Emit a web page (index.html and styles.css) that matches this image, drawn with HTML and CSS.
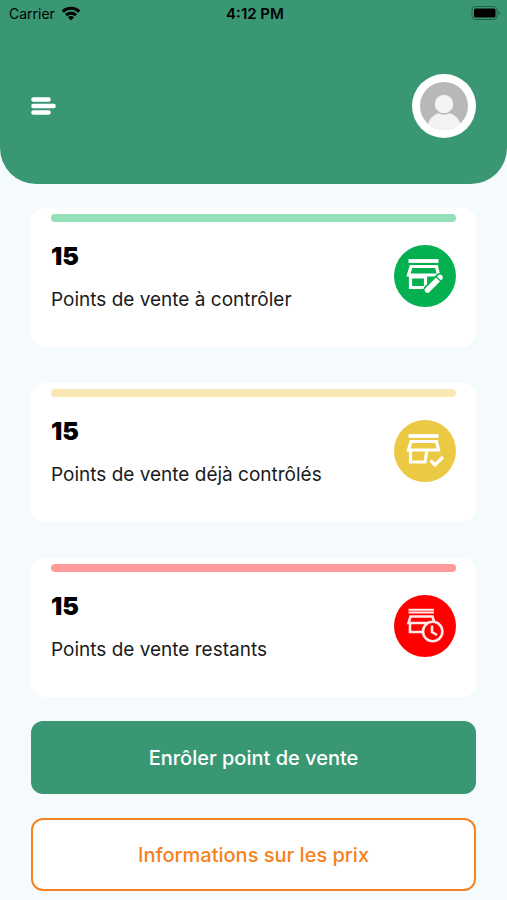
FILE: index.html
```html
<!DOCTYPE html>
<html lang="fr">
<head>
    <meta charset="UTF-8">
    <meta name="viewport" content="width=device-width, initial-scale=1.0">
    <title>Points de vente</title>
    <link rel="stylesheet" href="styles.css">
</head>
<body>
    <header class="header">
        <div class="status-bar">
            <div class="carrier">
                <span>Carrier</span>
                <svg width="20" height="15" viewBox="0 0 20 15" fill="none" stroke="#000" stroke-width="3">
                    <path d="M1.7 5.7a12 12 0 0 1 16.6 0"/>
                    <path d="M5 9.2a7.200 7.200 0 0 1 10 0"/>
                    <path d="M10 14.500 7 11.300a4.200 4.200 0 0 1 6 0z" fill="#000" stroke="none"/>
                </svg>
            </div>
            <span class="time">4:12 PM</span>
            <div class="battery">
                <svg width="30" height="14" viewBox="0 0 30 14">
                    <rect x="1" y="0.500" width="25" height="13" rx="3.500" fill="none" stroke="#226048"/>
                    <rect x="3" y="2.500" width="21.500" height="9" rx="1.500"/>
                    <path d="M27.500 5v4c2-.8 2-3.200 0-4z" fill="#226048"/>
                </svg>
            </div>
        </div>
        <div class="toolbar">
            <button type="button" class="menu-btn" aria-label="Menu">
                <svg width="25" height="20" viewBox="0 0 25 20" fill="none" stroke="#fff" stroke-width="4.600" stroke-linecap="round">
                    <path d="M2.500 3.500h15M2.500 10h20M2.500 16.500h15"/>
                </svg>
            </button>
            <button type="button" class="avatar" aria-label="Profil">
                <svg width="48" height="48" viewBox="0 0 48 48">
                    <circle cx="24" cy="24" r="24" fill="#b8b8b8"/>
                    <path d="M8 42c2-7 8-11.500 16-11.500S38.500 35 40.500 42A24 24 0 0 1 8 42z" fill="#f3f3f3"/>
                    <circle cx="24" cy="22" r="10" fill="#f3f3f3" stroke="#b8b8b8" stroke-width="1.500"/>
                </svg>
            </button>
        </div>
    </header>

    <main class="content">
        <section class="card green">
            <div class="card-bar"></div>
            <div class="card-body">
                <div>
                    <h2>15</h2>
                    <p>Points de vente à contrôler</p>
                </div>
                <svg class="card-icon" viewBox="0 0 62 62" fill="none" stroke="#fff" stroke-width="3.200">
                    <circle cx="31" cy="31" r="31" fill="#04b050" stroke="none"/>
                    <path d="M14.500 16h30" stroke-width="3.800"/>
                    <path d="M17 21.500h25.500l2 8.500h-30zM16.500 30v12.500h15V30M16.500 32h15"/>
                    <path d="M34 44.500l12-12" stroke="#04b050" stroke-width="9" stroke-linecap="round"/>
                    <path d="M33.500 45l12.500-12.500" stroke-width="5.500" stroke-linecap="round"/>
                    <path d="M42 31.500l5 5" stroke="#04b050" stroke-width="1.200"/>
                </svg>
            </div>
        </section>

        <section class="card yellow">
            <div class="card-bar"></div>
            <div class="card-body">
                <div>
                    <h2>15</h2>
                    <p>Points de vente déjà contrôlés</p>
                </div>
                <svg class="card-icon" viewBox="0 0 62 62" fill="none" stroke="#fff" stroke-width="3.200">
                    <circle cx="31" cy="31" r="31" fill="#ecc943" stroke="none"/>
                    <path d="M14.500 16h30" stroke-width="3.800"/>
                    <path d="M17 21.500h25.500l2 8.500h-30zM16.500 30v12h14.500l2-12"/>
                    <path d="M36.500 40.500l4.500 4.500 8-8"/>
                </svg>
            </div>
        </section>

        <section class="card red">
            <div class="card-bar"></div>
            <div class="card-body">
                <div>
                    <h2>15</h2>
                    <p>Points de vente restants</p>
                </div>
                <svg class="card-icon" viewBox="0 0 62 62" fill="none" stroke="#ffe9e9" stroke-width="2.600">
                    <circle cx="31" cy="31" r="31" fill="#fe0000" stroke="none"/>
                    <path d="M14.500 14.700h25.500M14.500 17.600h25.500" stroke-width="2"/>
                    <path d="M16.500 21.500h22l2 6.500h-26zM16 28v9h14"/>
                    <circle cx="38.700" cy="36.500" r="9.700" fill="#fe0000"/>
                    <path d="M38 30.500v6.500l5 3"/>
                </svg>
            </div>
        </section>

        <div class="actions">
            <button type="button" class="btn btn-primary">Enrôler point de vente</button>
            <button type="button" class="btn btn-outline">Informations sur les prix</button>
        </div>
    </main>
</body>
</html>
```
FILE: styles.css
```css
* {
    box-sizing: border-box;
}
body {
    margin: 0;
    font-family: Inter, "Liberation Sans", sans-serif;
    background-color: #f5fafd;
    color: #000;
}
button {
    font-family: inherit;
    cursor: pointer;
}
svg {
    display: block;
}
.header {
    background-color: #3a9774;
    border-radius: 0 0 36px 36px;
    padding-bottom: 46px;
}
.status-bar {
    display: grid;
    grid-template-columns: 1fr auto 1fr;
    align-items: center;
    height: 26px;
    padding: 0 6px 0 9px;
    font-size: 14px;
}
.carrier {
    display: flex;
    align-items: center;
    gap: 6px;
}
.time {
    font-size: 15px;
    font-weight: 600;
}
.battery {
    justify-self: end;
}
.toolbar {
    display: flex;
    justify-content: space-between;
    align-items: center;
    padding: 48px 31px 0;
}
.menu-btn {
    padding: 0;
    border: none;
    background: none;
}
.avatar {
    padding: 8px;
    border: none;
    border-radius: 50%;
    background-color: #fff;
}
.content {
    display: flex;
    flex-direction: column;
    gap: 36px;
    padding: 24px 31px 9px;
}
.card {
    min-height: 139px;
    padding: 6px 20px;
    border-radius: 14px;
    background-color: #fff;
}
.card-bar {
    height: 8px;
    border-radius: 4px;
}
.card-body {
    display: flex;
    justify-content: space-between;
    padding-top: 18px;
}
.card h2 {
    margin: 0;
    font-size: 25px;
    line-height: 32px;
    font-weight: 900;
}
.card p {
    margin: 14px 0 0;
    font-size: 19px;
    line-height: 28px;
    color: #1a1a1a;
}
.card-icon {
    width: 62px;
    height: 62px;
    margin-top: 5px;
}
.green .card-bar {
    background-color: #96e0b9;
}
.yellow .card-bar {
    background-color: #fae8b4;
}
.red .card-bar {
    background-color: #ff9a9a;
}
.actions {
    display: flex;
    flex-direction: column;
    gap: 24px;
    margin-top: -12px;
}
.btn {
    height: 73px;
    border-radius: 12px;
    font-size: 20px;
    font-weight: 500;
}
.btn-primary {
    border: none;
    background-color: #3a9774;
    color: #fff;
}
.btn-outline {
    border: 2px solid #f58220;
    background-color: #fff;
    color: #f58220;
}
```
